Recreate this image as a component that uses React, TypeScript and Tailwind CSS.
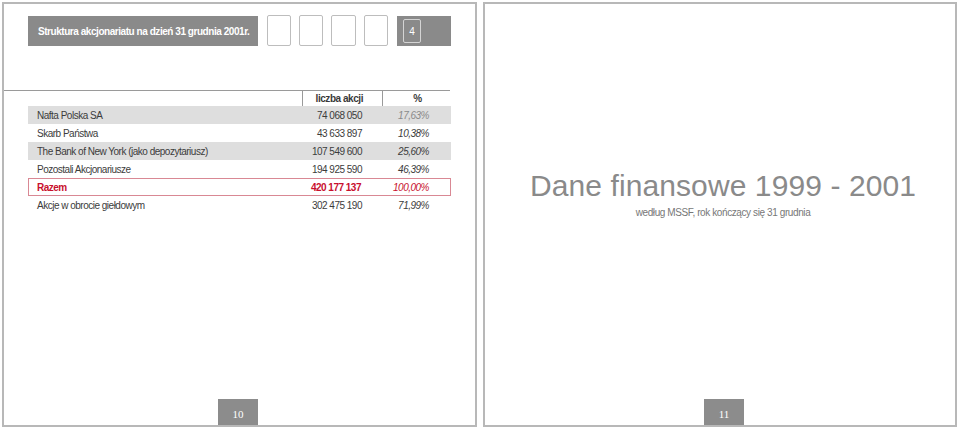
type Row = { label: string; num: string; pct: string; bg?: boolean; total?: boolean; pctColor?: string };

const rows: Row[] = [
  { label: "Nafta Polska SA", num: "74 068 050", pct: "17,63%", bg: true, pctColor: "text-[#8a8a8a]" },
  { label: "Skarb Państwa", num: "43 633 897", pct: "10,38%" },
  { label: "The Bank of New York (jako depozytariusz)", num: "107 549 600", pct: "25,60%", bg: true },
  { label: "Pozostali Akcjonariusze", num: "194 925 590", pct: "46,39%" },
  { label: "Razem", num: "420 177 137", pct: "100,00%", total: true },
  { label: "Akcje w obrocie giełdowym", num: "302 475 190", pct: "71,99%" },
];

export default function App() {
  return (
    <div className="w-[960px] h-[428px] bg-white flex gap-[6px] pt-[2px] pl-[2px] font-['Liberation_Sans',Arial,sans-serif]">
      {/* Left page */}
      <div className="w-[475px] h-[425px] border-2 border-[#b8b8b8] flex flex-col">
        <div className="mt-[12px] ml-[24px] flex h-[30px]">
          <div className="w-[230px] h-[30px] bg-[#8a8a8a] flex items-center pl-[10px] text-white font-bold text-[10px] tracking-[-0.45px]">
            Struktura akcjonariatu na dzień 31 grudnia 2001r.
          </div>
          <div className="ml-[9px] flex gap-[8px]">
            <div className="w-[24px] h-[31px] -mt-px border border-[#bdbdbd] rounded-[2px] bg-white" />
            <div className="w-[24px] h-[31px] -mt-px border border-[#bdbdbd] rounded-[2px] bg-white" />
            <div className="w-[25px] h-[31px] -mt-px border border-[#bdbdbd] rounded-[2px] bg-white" />
            <div className="w-[24px] h-[31px] -mt-px border border-[#bdbdbd] rounded-[2px] bg-white" />
          </div>
          <div className="ml-[9px] w-[54px] h-[30px] bg-[#8a8a8a] pt-[3px] pl-[6px]">
            <div className="w-[18px] h-[24px] border border-[#d4d4d4] rounded-[2px] flex items-center justify-center text-white text-[10px]">
              4
            </div>
          </div>
        </div>

        {/* Table */}
        <div className="mt-[44px] w-[446px] border-t border-[#9a9a9a]" />
        <div className="flex h-[15px] text-[10px] tracking-[-0.45px] text-[#3a3a3a]">
          <div className="w-[298px]" />
          <div className="w-[80px] border-l border-[#9a9a9a] flex items-center justify-end pr-[19px] font-bold">
            liczba akcji
          </div>
          <div className="w-[68px] border-l border-[#9a9a9a] flex items-center justify-center pl-[2px] font-bold">
            %
          </div>
        </div>
        <div className="ml-[24px] w-[423px] flex flex-col text-[10px] tracking-[-0.5px] text-[#3c3c3c]">
          {rows.map((r) => (
            <div
              key={r.label}
              className={
                "h-[18px] flex items-center " +
                (r.bg ? "bg-[#dedede] " : "") +
                (r.total ? "border border-[#d98894] text-[#c8102e] " : "")
              }
            >
              <div className={"flex-1 " + (r.total ? "pl-[8px] font-bold" : "pl-[9px]")}>{r.label}</div>
              <div className={"w-[80px] text-right pr-[20px] " + (r.total ? "font-bold" : "")}>{r.num}</div>
              <div className={"w-[69px] text-right italic " + (r.total ? "pr-[21px]" : "pr-[22px]") + " " + (r.pctColor ?? "")}>
                {r.pct}
              </div>
            </div>
          ))}
        </div>

        <div className="mt-auto ml-[214px] w-[40px] h-[26px] bg-[#8c8c8c] flex items-center justify-center pt-[4px] text-white text-[11px] font-['Liberation_Serif',serif]">
          10
        </div>
      </div>

      {/* Right page */}
      <div className="w-[474px] h-[425px] border-2 border-[#b8b8b8] flex flex-col">
        <div className="mt-[167px] pl-[6px] text-center text-[30px] leading-[30px] text-[#8a8a8a] tracking-[0.1px]">
          Dane finansowe 1999 - 2001
        </div>
        <div className="mt-[7px] pl-[6px] text-center text-[10px] leading-[10px] tracking-[-0.4px] text-[#777]">
          według MSSF, rok kończący się 31 grudnia
        </div>
        <div className="mt-auto ml-[219px] w-[40px] h-[26px] bg-[#8c8c8c] flex items-center justify-center pt-[4px] text-white text-[11px] font-['Liberation_Serif',serif]">
          11
        </div>
      </div>
    </div>
  );
}
